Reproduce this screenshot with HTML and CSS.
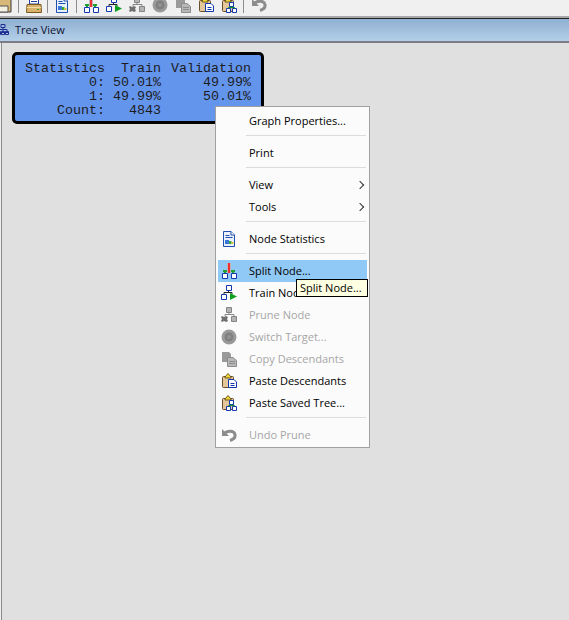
FILE: index.html
```html
<!DOCTYPE html>
<html lang="en">
<head>
<meta charset="UTF-8">
<title>Tree View</title>
<link rel="stylesheet" href="styles.css">
</head>
<body>
<svg class="icon-defs" aria-hidden="true">
  <symbol id="i-save" viewBox="0 0 16 16">
    <path d="M0 0H15V15H0Z" fill="#d8b878" stroke="#3a3a3a"/>
    <path d="M3 9H12V15H3Z" fill="#f4f0e0" stroke="#555"/>
  </symbol>
  <symbol id="i-print" viewBox="0 0 16 16">
    <path d="M3.500 0H12.500V7H3.500Z" fill="#fff" stroke="#1f3f9f"/>
    <path d="M5 2.500H11M5 4.500H11" stroke="#1f3f9f"/>
    <path d="M1 7.500H15L15.500 15.500H.5Z" fill="#d9b36a" stroke="#7a5a20"/>
    <path d="M1 10.500H15" stroke="#f2dca8"/>
    <path d="M11 12.500H13" stroke="#3aa03a"/>
  </symbol>
  <symbol id="i-stats" viewBox="0 0 16 16">
    <path d="M2.500.5H10L13.500 4V15.500H2.500Z" fill="#e8f0fc" stroke="#1f4fb0"/>
    <path d="M10 .5V4H13.500" fill="#fff" stroke="#1f4fb0"/>
    <path d="M4.500 4.500H8.500M4.500 6.500H11.500" stroke="#1f4fb0"/>
    <path d="M4 9H8V13H4Z" fill="#3a78d8"/>
    <path d="M8 10H10.500V13H8Z" fill="#38a838"/>
    <path d="M10.500 11H12.500V13H10.500Z" fill="#e0c030"/>
  </symbol>
  <symbol id="i-split" viewBox="0 0 16 16">
    <path d="M6 0H10V10H6Z" fill="#c8b0b8"/>
    <path d="M7 0H9V10H7Z" fill="#e83030"/>
    <path d="M1.500 10.500H6.500V15.500H1.500ZM10.500 10.500H15.500V15.500H10.500Z" fill="#fff" stroke="#1438b0"/>
    <path d="M2 7H6V9H5V10H3V9H2ZM10 7H14V9H13V10H11V9H10Z" fill="#20a030"/>
  </symbol>
  <symbol id="i-train" viewBox="0 0 16 16">
    <path d="M5.500 .5H10.500V5.500H5.500ZM.5 9.500H5.500V14.500H.5Z" fill="#fff" stroke="#1438b0"/>
    <path d="M7.500 6V7.500M3 9V7.500H11V9" fill="none" stroke="#222"/>
    <path d="M9 8L16 11.500L9 15Z" fill="#10a020"/>
  </symbol>
  <symbol id="i-prune" viewBox="0 0 16 16">
    <path d="M5.500 .5H10.500V5.500H5.500ZM10.500 9.500H15.500V14.500H10.500Z" fill="#b4b4b4" stroke="#858585"/>
    <path d="M8 6V7.500M4 9V7.500H13V9" fill="none" stroke="#858585"/>
    <path d="M1 9L3 10L5 9L7 10L6 12L7 14L5 15L3 14L1 15L0 14L1 12L0 10Z" fill="#707070"/>
  </symbol>
  <symbol id="i-switch" viewBox="0 0 16 16">
    <circle cx="8" cy="8" r="7.500" fill="#9a9a9a"/>
    <circle cx="8" cy="8" r="4.500" fill="#808080"/>
    <circle cx="8" cy="8" r="2" fill="#929292"/>
  </symbol>
  <symbol id="i-copy" viewBox="0 0 16 16">
    <path d="M1 1H8L10 3V11H1Z" fill="#9a9a9a"/>
    <path d="M6.500 6.500H12L15.500 9.500V15.500H6.500Z" fill="#b8b8b8" stroke="#8c8c8c"/>
    <path d="M8 10.500H14M8 12.500H14" stroke="#8c8c8c"/>
  </symbol>
  <symbol id="i-paste" viewBox="0 0 16 16">
    <rect x="1.500" y="3.500" width="11" height="11" rx="1" fill="#e4c79a" stroke="#6a4c28"/>
    <path d="M4 4L7 .5L10 4V5H4Z" fill="#f4d838" stroke="#6a5a20"/>
    <path d="M7.500 6.500H13L15.500 9V14.500H7.500Z" fill="#fff" stroke="#1438b0"/>
    <path d="M9.500 10.500H13.500M9.500 12.500H13.500" stroke="#1438b0"/>
  </symbol>
  <symbol id="i-pastetree" viewBox="0 0 16 16">
    <rect x="1.500" y="3.500" width="11" height="11" rx="1" fill="#e4c79a" stroke="#6a4c28"/>
    <path d="M4 4L7 .5L10 4V5H4Z" fill="#f4d838" stroke="#6a5a20"/>
    <path d="M8.500 5.500H12.500V9.500H8.500ZM5.500 11.500H9.500V15.500H5.500ZM11.500 11.500H15.500V15.500H11.500Z" fill="#fff" stroke="#1438b0"/>
    <path d="M10.500 9.500V10.500M7.500 11.500V10.500H13.500V11.500" fill="none" stroke="#109030"/>
  </symbol>
  <symbol id="i-undo" viewBox="0 0 16 16">
    <path d="M1 2V9H8Z" fill="#8c8c8c"/>
    <path d="M3.500 6.500C6 3.500 13 3 14 7.500C14.500 10.500 12.500 12.500 9 13.500" fill="none" stroke="#8c8c8c" stroke-width="3"/>
  </symbol>
  <symbol id="i-tree" viewBox="0 0 12 12">
    <path d="M4 .5H8V3.500H4ZM.5 7.500H3.500V10.500H.5ZM4.500 7.500H7.500V10.500H4.500ZM8.500 7.500H11.500V10.500H8.500Z" fill="none" stroke="#1c2c90"/>
    <path d="M6 3.500V7.500M2 7.500V5.500H10V7.500M0 8.500H12" fill="none" stroke="#1c2c90"/>
  </symbol>
</svg>

<div class="toolbar">
  <svg class="tb-icon tb-save"><use href="#i-save"/></svg>
  <span class="tb-sep"></span>
  <svg class="tb-icon tb-shift"><use href="#i-print"/></svg>
  <span class="tb-sep"></span>
  <svg class="tb-icon tb-wide"><use href="#i-stats"/></svg>
  <span class="tb-sep"></span>
  <svg class="tb-icon"><use href="#i-split"/></svg>
  <svg class="tb-icon"><use href="#i-train"/></svg>
  <svg class="tb-icon"><use href="#i-prune"/></svg>
  <svg class="tb-icon"><use href="#i-switch"/></svg>
  <svg class="tb-icon"><use href="#i-copy"/></svg>
  <svg class="tb-icon"><use href="#i-paste"/></svg>
  <svg class="tb-icon tb-wide"><use href="#i-pastetree"/></svg>
  <span class="tb-sep"></span>
  <svg class="tb-icon tb-shift"><use href="#i-undo"/></svg>
</div>

<div class="title-bar">
  <svg class="title-icon"><use href="#i-tree"/></svg>
  <span class="label">Tree View</span>
</div>

<div class="canvas">
  <div class="node">
    <span>Statistics</span><span>Train</span><span>Validation</span>
    <span>0:</span><span>50.01%</span><span>49.99%</span>
    <span>1:</span><span>49.99%</span><span>50.01%</span>
    <span>Count:</span><span>4843</span><span></span>
  </div>

  <div class="menu">
    <div class="item"><span class="label">Graph Properties...</span></div>
    <div class="sep"></div>
    <div class="item"><span class="label">Print</span></div>
    <div class="sep"></div>
    <div class="item"><span class="label">View</span><span class="chevron"></span></div>
    <div class="item"><span class="label">Tools</span><span class="chevron"></span></div>
    <div class="sep"></div>
    <div class="item"><svg class="item-icon"><use href="#i-stats"/></svg><span class="label">Node Statistics</span></div>
    <div class="sep"></div>
    <div class="item active"><svg class="item-icon"><use href="#i-split"/></svg><span class="label">Split Node...</span></div>
    <div class="item"><svg class="item-icon"><use href="#i-train"/></svg><span class="label">Train Node...</span></div>
    <div class="item disabled"><svg class="item-icon"><use href="#i-prune"/></svg><span class="label">Prune Node</span></div>
    <div class="item disabled"><svg class="item-icon"><use href="#i-switch"/></svg><span class="label">Switch Target...</span></div>
    <div class="item disabled"><svg class="item-icon"><use href="#i-copy"/></svg><span class="label">Copy Descendants</span></div>
    <div class="item"><svg class="item-icon"><use href="#i-paste"/></svg><span class="label">Paste Descendants</span></div>
    <div class="item"><svg class="item-icon"><use href="#i-pastetree"/></svg><span class="label">Paste Saved Tree...</span></div>
    <div class="sep"></div>
    <div class="item disabled"><svg class="item-icon"><use href="#i-undo"/></svg><span class="label">Undo Prune</span></div>
  </div>

  <div class="tooltip">Split Node...</div>
</div>
</body>
</html>
```

FILE: styles.css
```css
html, body {
    margin: 0;
    padding: 0;
    height: 100%;
    overflow: hidden;
}

body {
    display: flex;
    flex-direction: column;
    background: #f0f0f0;
    font-family: "Open Sans", "Noto Sans", sans-serif;
    font-size: 11px;
    color: #000;
}

.icon-defs {
    position: absolute;
    width: 0;
    height: 0;
}

/* toolbar, top of the icons is cut off by the window edge */
.toolbar {
    display: flex;
    align-items: flex-end;
    height: 13px;
    padding: 0 0 3px 0;
    overflow: hidden;
    background: #f0f0f0;
    border-bottom: 2px solid #a8a8a8;
}

.tb-icon {
    flex: none;
    width: 16px;
    height: 16px;
    margin-right: 7px;
}

.tb-save {
    margin-left: -4px;
    margin-right: 8px;
}

.tb-shift {
    margin-left: 1px;
}

.tb-wide {
    margin-right: 8px;
}

.tb-sep {
    flex: none;
    width: 1px;
    height: 16px;
    margin-left: -2px;
    margin-right: 6px;
    background: #8c8c8c;
}

.title-bar {
    display: flex;
    align-items: center;
    gap: 6px;
    height: 22px;
    background: linear-gradient(#8fb0d2, #b4cfe9);
    border-top: 1px solid #222;
    border-bottom: 2px solid #7c7c84;
    color: #101030;
}

.title-icon {
    flex: none;
    width: 12px;
    height: 12px;
    margin-left: -3px;
}

.label {
    margin-bottom: 2px;
}

.canvas {
    position: relative;
    flex: 1;
    margin-left: 1px;
    background: #e0e0e0;
    border-left: 1px solid #8a8a8a;
}

.node {
    position: absolute;
    left: 10px;
    top: 9px;
    width: 226px;
    height: 60px;
    padding: 6px 10px 0 10px;
    display: grid;
    grid-template-columns: 80px 56px 90px;
    grid-auto-rows: 14px;
    justify-items: end;
    align-items: center;
    background: #6495ed;
    border: 3px solid #000;
    border-radius: 5px;
    font-family: "Liberation Mono", monospace;
    font-size: 13.33px;
    color: #1c1c1c;
    white-space: pre;
}

.menu {
    position: absolute;
    left: 213px;
    top: 63px;
    width: 149px;
    padding: 3px 2px 1px 2px;
    background: #fbfbfb;
    border: 1px solid #a0a0a0;
}

.item {
    position: relative;
    display: flex;
    align-items: center;
    height: 22px;
    padding-left: 31px;
}

.item.active {
    background: #90c8f6;
}

.item.disabled {
    color: #a6a6a6;
}

.item-icon {
    position: absolute;
    left: 3px;
    top: 3px;
    width: 16px;
    height: 16px;
}

.chevron {
    position: absolute;
    right: 4px;
    top: 8px;
    width: 5px;
    height: 5px;
    border-top: 1px solid #333;
    border-right: 1px solid #333;
    transform: rotate(45deg);
}

.sep {
    height: 1px;
    margin: 3px 1px 6px 28px;
    background: #dcdcdc;
}

.tooltip {
    position: absolute;
    left: 294px;
    top: 236px;
    width: 67px;
    height: 16px;
    padding-left: 3px;
    line-height: 16px;
    background: #ffffe1;
    border: 1px solid #000;
    white-space: nowrap;
}
```
